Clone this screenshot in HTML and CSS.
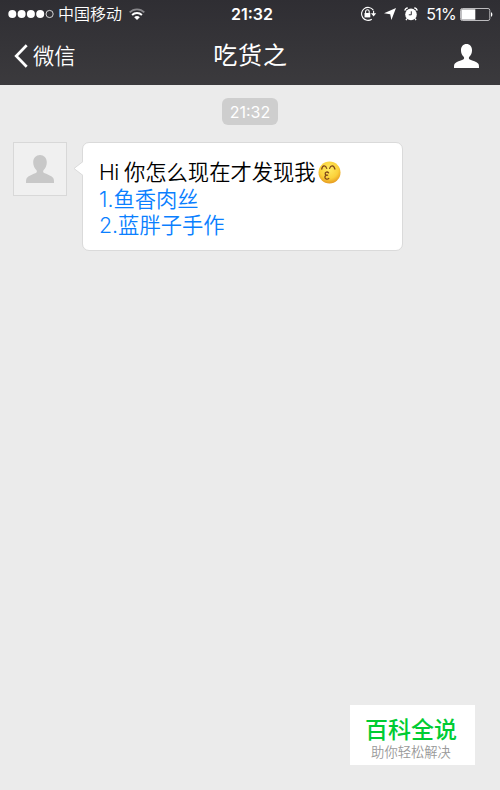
FILE: index.html
```
<!DOCTYPE html>
<html lang="zh-CN">
<head>
  <meta charset="utf-8">
  <meta name="viewport" content="width=device-width, initial-scale=1">
  <title>吃货之</title>
  <link rel="stylesheet" href="styles.css">
</head>
<body>

  <header class="top">
    <div class="status">
      <div class="status-left">
        <svg class="signal" width="46" height="10" viewBox="0 0 46 10">
          <g fill="#fff">
            <circle cx="4.3" cy="5" r="4"/>
            <circle cx="13.6" cy="5" r="4"/>
            <circle cx="22.9" cy="5" r="4"/>
            <circle cx="32.2" cy="5" r="4"/>
          </g>
          <circle cx="41.6" cy="5" r="3.6" fill="none" stroke="#fff" stroke-width=".8"/>
        </svg>
        <span class="carrier">中国移动</span>
        <svg class="wifi" width="16" height="13" viewBox="0 0 16 13" fill="none">
          <path d="M.7 4.4C4.7.3 11.3.3 15.3 4.4" stroke="#88878b" stroke-width="1.8"/>
          <path d="M3.1 7C5.8 4.3 10.2 4.3 12.9 7" stroke="#fff" stroke-width="1.9"/>
          <path d="M5.2 9.2C6.8 7.7 9.2 7.7 10.8 9.2L8 12z" fill="#fff"/>
        </svg>
      </div>
      <span class="clock">21:32</span>
      <div class="status-right">
        <svg class="lock" width="17" height="16" viewBox="0 0 17 16" fill="none">
          <path d="M13.3 4.1A6.5 6.5 0 1 0 11.8 13.2" stroke="#fff" stroke-width="1.1"/>
          <path d="M13.6 4.8V8" stroke="#fff" stroke-width="1.1"/>
          <path d="M10.9 7.2h5.3l-2.6 3.2z" fill="#fff"/>
          <path d="M4.5 7h5.8v4.4H4.5z" fill="#fff"/>
          <path d="M5.6 7V5.6a1.8 1.8 0 0 1 3.6 0V7" stroke="#fff" stroke-width="1.1"/>
        </svg>
        <svg class="arrow" width="12" height="12" viewBox="0 0 12 12">
          <path d="M12 0L7.4 12 6.2 6.2 0 5.2z" fill="#fff"/>
        </svg>
        <svg class="alarm" width="14" height="14" viewBox="0 0 14 14" fill="none">
          <circle cx="7" cy="7.4" r="5.8" fill="#fff"/>
          <path d="M.8 3.6C1 2 2.2 1 3.8.8M13.2 3.6C13 2 11.8 1 10.2.8" stroke="#fff" stroke-width="1.2"/>
          <path d="M3 11.5l-1 1.7M11 11.5l1 1.7" stroke="#fff" stroke-width="1.3"/>
          <path d="M7.3 4.3v3.5H4.8" stroke="#343338" stroke-width="1"/>
        </svg>
        <span class="percent">51%</span>
        <svg class="battery" width="33" height="13" viewBox="0 0 33 13">
          <rect x=".5" y=".5" width="29.3" height="12" rx="1.8" fill="none" stroke="#bcbbbe"/>
          <path d="M1.3 1.3h14v10.4h-14z" fill="#fff"/>
          <path d="M31 4.2c1.8.3 1.8 4.3 0 4.6z" fill="#fff"/>
        </svg>
      </div>
    </div>

    <nav class="nav">
      <a class="back">
        <svg width="14" height="24" viewBox="0 0 14 24" fill="none">
          <path d="M12.7 1.2L2.2 12l10.5 10.8" stroke="#fff" stroke-width="2.7"/>
        </svg>
        <span>微信</span>
      </a>
      <h1 class="title">吃货之</h1>
      <svg class="profile" width="25" height="24" viewBox="0 0 28 27" preserveAspectRatio="none">
        <path d="M14 0c3.8 0 6.2 2.9 6.2 7 0 3.2-1.2 5.8-3 7.4-.9.8-.7 2.5.5 3 3.5 1.4 7.4 2.7 9.3 4.5 1 .9 1 2.9 1 5.1H0c0-2.2 0-4.2 1-5.1 1.9-1.8 5.8-3.1 9.3-4.5 1.2-.5 1.4-2.2.5-3-1.8-1.6-3-4.2-3-7.4 0-4.1 2.4-7 6.2-7z" fill="#fff"/>
      </svg>
    </nav>
  </header>

  <main class="chat">
    <span class="time">21:32</span>

    <div class="message">
      <div class="avatar">
        <svg width="28" height="28" viewBox="0 0 28 27" preserveAspectRatio="none">
          <path d="M14 0c3.8 0 6.8 2.9 6.8 7 0 3.2-1.3 5.8-3.1 7.4-.9.8-.7 2.5.5 3 3.5 1.4 6.9 2.7 8.8 4.5 1 .9 1 2.9 1 5.1H0c0-2.2 0-4.2 1-5.1 1.9-1.8 5.3-3.1 8.8-4.5 1.2-.5 1.4-2.2.5-3-1.8-1.6-3.1-4.2-3.1-7.4 0-4.1 3-7 6.8-7z" fill="#c8c8c8"/>
        </svg>
      </div>
      <div class="bubble">
        <svg class="tail" width="10" height="15" viewBox="0 0 10 15">
          <path d="M10 .5L1 7.5l9 7" fill="#fff" stroke="#dadada"/>
        </svg>
        <p class="line"><span class="hi">Hi </span>你怎么现在才发现我<svg class="emoji" width="23" height="23" viewBox="0 0 23 23">
          <defs>
            <radialGradient id="face" cx=".48" cy=".35" r=".65">
              <stop offset="0" stop-color="#ffeb62"/>
              <stop offset=".65" stop-color="#fbd13a"/>
              <stop offset="1" stop-color="#e69a20"/>
            </radialGradient>
          </defs>
          <circle cx="11.5" cy="11.5" r="11" fill="url(#face)"/>
          <g fill="none" stroke="#80491a" stroke-width="1.3" stroke-linecap="round" stroke-linejoin="round">
            <path d="M3.7 8C4.5 4 7.5 3.7 8.7 7.4M11.6 7.4C12.8 3.7 15.8 4 16.9 8"/>
            <path d="M10.6 11.8C9.4 10.4 7.1 11 7.2 12.7c.1 1.2 1.3 1.5 2.4 1.5-1.4 0-2.7.6-2.7 2.1 0 2 2.7 2.5 3.9 1.1"/>
          </g>
        </svg></p>
        <a class="line link">1.鱼香肉丝</a>
        <a class="line link">2.蓝胖子手作</a>
      </div>
    </div>
  </main>

  <aside class="brand">
    <strong class="brand-name">百科全说</strong>
    <span class="brand-slogan">助你轻松解决</span>
  </aside>

</body>
</html>
```

FILE: styles.css
```
* {
  box-sizing: border-box;
}

body {
  margin: 0;
  min-height: 790px;
  display: flex;
  flex-direction: column;
  background: #ebebeb;
  font-family: Inter, "Noto Sans CJK SC", sans-serif;
}

svg {
  display: block;
  flex: none;
}

/* header */
.top {
  height: 85px;
  background: linear-gradient(#2f2e33, #3b3a3d);
  color: #fff;
}

.status {
  display: grid;
  grid-template-columns: 1fr auto 1fr;
  height: 27px;
  padding: 0 7px 0 8px;
  align-items: center;
  line-height: 28px;
  font-size: 16px;
  font-weight: 350;
}

.status-left,
.status-right {
  display: flex;
  align-items: center;
}

.status-right {
  justify-content: flex-end;
}

.carrier {
  margin: 0 7px 0 4px;
}

.clock {
  padding-left: 3px;
  font-weight: 600;
}

.lock {
  margin-right: 7px;
}

.arrow {
  margin-right: 8px;
}

.alarm {
  margin-right: 8px;
}

.percent {
  margin-right: 4px;
  font-weight: 400;
  letter-spacing: -0.7px;
}

.nav {
  display: grid;
  grid-template-columns: 1fr auto 1fr;
  height: 58px;
  padding: 0 21px 0 14px;
  align-items: center;
}

.back {
  display: flex;
  align-items: center;
  gap: 5px;
  font-size: 21.3px;
  font-weight: 350;
  line-height: 30px;
}

.title {
  margin: 0;
  padding-left: 8px;
  font-size: 24px;
  font-weight: 400;
  line-height: 36px;
  letter-spacing: 0.8px;
}

.profile {
  justify-self: end;
}

/* conversation */
.chat {
  flex: 1;
  display: flex;
  flex-direction: column;
  padding: 13px 13px 0;
}

.time {
  align-self: center;
  width: 56px;
  height: 27px;
  border-radius: 6px;
  background: #cecece;
  color: #fff;
  font-size: 16px;
  line-height: 28px;
  text-align: center;
}

.message {
  display: flex;
  align-items: flex-start;
  margin-top: 17px;
}

.avatar {
  display: flex;
  align-items: center;
  justify-content: center;
  width: 54px;
  height: 54px;
  border: 1px solid #d8d8d8;
  background: #f0f0f0;
}

.bubble {
  position: relative;
  width: 321px;
  height: 109px;
  margin-left: 15px;
  padding: 16px 16px 0;
  border: 1px solid #dadada;
  border-radius: 7px;
  background: #fff;
}

.tail {
  position: absolute;
  left: -10px;
  top: 18px;
}

.line {
  display: flex;
  align-items: center;
  margin: 0;
  font-size: 21.3px;
  font-weight: 350;
  line-height: 26.5px;
  white-space: pre;
}

.hi {
  letter-spacing: -0.6px;
}

.link {
  color: #0a7fff;
}

.emoji {
  margin-left: 2px;
}

/* corner label */
.brand {
  align-self: flex-end;
  display: flex;
  flex-direction: column;
  align-items: center;
  width: 125px;
  height: 60px;
  margin: 0 25px 25px 0;
  padding: 11px 3px 0 0;
  background: #fff;
}

.brand-name {
  color: #0c3;
  font-size: 23px;
  font-weight: 500;
  line-height: 29px;
}

.brand-slogan {
  color: #999;
  font-size: 13.3px;
  font-weight: 350;
  line-height: 14px;
}
```
